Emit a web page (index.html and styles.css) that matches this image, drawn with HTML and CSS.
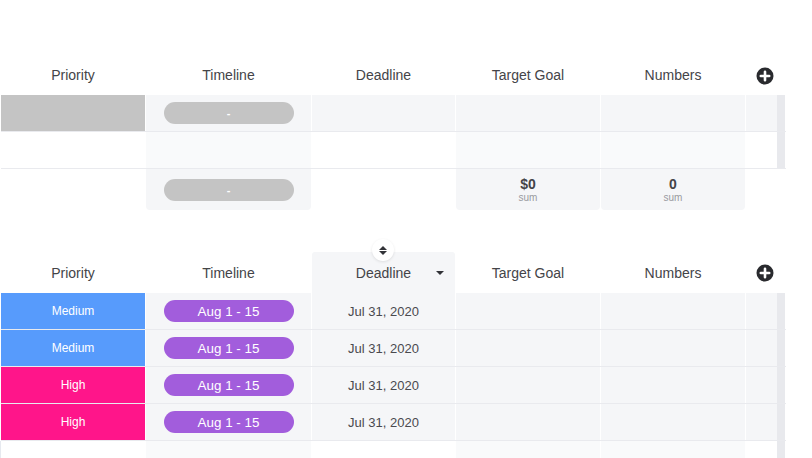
FILE: index.html
```html
<!DOCTYPE html>
<html>
<head>
<meta charset="utf-8">
<link rel="stylesheet" href="styles.css">
</head>
<body>
<div class="board">
  <section class="group group-top">
    <div class="row head">
      <div class="hcell">Priority</div>
      <div class="hcell">Timeline</div>
      <div class="hcell">Deadline</div>
      <div class="hcell">Target Goal</div>
      <div class="hcell">Numbers</div>
      <div class="hcell add-col">
        <svg class="plus" width="18" height="18" viewBox="0 0 18 18"><circle cx="9" cy="9" r="8.5" fill="#292a2e"/><path d="M9 4.8v8.4M4.8 9h8.4" stroke="#fff" stroke-width="2.6" stroke-linecap="round"/></svg>
      </div>
    </div>
    <div class="row item">
      <div class="cell status empty"></div>
      <div class="cell"><span class="pill pill-empty">-</span></div>
      <div class="cell"></div>
      <div class="cell"></div>
      <div class="cell"></div>
      <div class="cell extra"><span class="stripe"></span></div>
    </div>
    <div class="row add">
      <div class="cell blank"></div>
      <div class="cell light"></div>
      <div class="cell blank"></div>
      <div class="cell light"></div>
      <div class="cell light"></div>
      <div class="cell extra blank"><span class="stripe"></span></div>
    </div>
    <div class="row summary">
      <div class="scell"></div>
      <div class="scell filled"><span class="pill pill-empty">-</span></div>
      <div class="scell"></div>
      <div class="scell filled"><span class="sum-val">$0</span><span class="sum-lbl">sum</span></div>
      <div class="scell filled"><span class="sum-val">0</span><span class="sum-lbl">sum</span></div>
      <div class="scell"></div>
    </div>
  </section>

  <section class="group group-bottom">
    <div class="row head">
      <div class="hcell">Priority</div>
      <div class="hcell">Timeline</div>
      <div class="hcell sorted">Deadline<span class="caret"></span>
        <span class="sort-btn"><span class="tri-up"></span><span class="tri-down"></span></span>
      </div>
      <div class="hcell">Target Goal</div>
      <div class="hcell">Numbers</div>
      <div class="hcell add-col">
        <svg class="plus" width="18" height="18" viewBox="0 0 18 18"><circle cx="9" cy="9" r="8.5" fill="#292a2e"/><path d="M9 4.8v8.4M4.8 9h8.4" stroke="#fff" stroke-width="2.6" stroke-linecap="round"/></svg>
      </div>
    </div>
    <div class="row item">
      <div class="cell status medium">Medium</div>
      <div class="cell"><span class="pill pill-time">Aug 1 - 15</span></div>
      <div class="cell date">Jul 31, 2020</div>
      <div class="cell"></div>
      <div class="cell"></div>
      <div class="cell extra"><span class="stripe"></span></div>
    </div>
    <div class="row item">
      <div class="cell status medium">Medium</div>
      <div class="cell"><span class="pill pill-time">Aug 1 - 15</span></div>
      <div class="cell date">Jul 31, 2020</div>
      <div class="cell"></div>
      <div class="cell"></div>
      <div class="cell extra"><span class="stripe"></span></div>
    </div>
    <div class="row item">
      <div class="cell status high">High</div>
      <div class="cell"><span class="pill pill-time">Aug 1 - 15</span></div>
      <div class="cell date">Jul 31, 2020</div>
      <div class="cell"></div>
      <div class="cell"></div>
      <div class="cell extra"><span class="stripe"></span></div>
    </div>
    <div class="row item">
      <div class="cell status high">High</div>
      <div class="cell"><span class="pill pill-time">Aug 1 - 15</span></div>
      <div class="cell date">Jul 31, 2020</div>
      <div class="cell"></div>
      <div class="cell"></div>
      <div class="cell extra"><span class="stripe"></span></div>
    </div>
    <div class="row add">
      <div class="cell blank edge"></div>
      <div class="cell light"></div>
      <div class="cell blank"></div>
      <div class="cell light"></div>
      <div class="cell light"></div>
      <div class="cell extra blank"><span class="stripe"></span></div>
    </div>
  </section>
</div>
</body>
</html>
```

FILE: styles.css
```css
html, body {
  margin: 0;
  padding: 0;
  background: #ffffff;
}

body {
  font-family: "Liberation Sans", Arial, Helvetica, sans-serif;
  color: #444448;
  width: 812px;
  height: 458px;
  overflow: hidden;
}

.board {
  padding-top: 55px;
  padding-left: 1px;
  width: 785px;
}

.group {
  display: flex;
  flex-direction: column;
}

.group-bottom {
  margin-top: 42px;
}

.row {
  display: grid;
  grid-template-columns: 144px 165px 143px 144px 144px 39px;
  column-gap: 1px;
}

.row.head {
  height: 40px;
}

.group-bottom .row.head {
  height: 41px;
}

.hcell {
  display: flex;
  align-items: center;
  justify-content: center;
  font-size: 14px;
  color: #444448;
  position: relative;
}

.hcell.add-col {
  justify-content: flex-start;
  padding-left: 10px;
}

.plus {
  display: block;
  margin-top: 1px;
}

.hcell.sorted {
  background: #f5f6f8;
  border-radius: 3px 3px 0 0;
}

.caret {
  position: absolute;
  right: 11px;
  top: 19px;
  width: 0;
  height: 0;
  border-left: 4px solid transparent;
  border-right: 4px solid transparent;
  border-top: 4px solid #323338;
}

.sort-btn {
  position: absolute;
  left: 60px;
  top: -13px;
  width: 22px;
  height: 22px;
  border-radius: 50%;
  background: #ffffff;
  box-shadow: 0 1px 3px rgba(0, 0, 0, 0.10);
  display: flex;
  flex-direction: column;
  align-items: center;
  justify-content: center;
  gap: 1px;
}

.tri-up {
  width: 0;
  height: 0;
  border-left: 4px solid transparent;
  border-right: 4px solid transparent;
  border-bottom: 4.5px solid #323338;
}

.tri-down {
  width: 0;
  height: 0;
  border-left: 4px solid transparent;
  border-right: 4px solid transparent;
  border-top: 4.5px solid #323338;
}

.row.item,
.row.add {
  height: 36px;
  border-bottom: 1px solid #e9eaee;
}

.cell {
  background: #f5f6f8;
  display: flex;
  align-items: center;
  justify-content: center;
}

.cell.blank {
  background: #ffffff;
}

.cell.light {
  background: #f9fafb;
}

.cell.edge {
  border-left: 1px solid #e6e9ef;
  margin-left: -1px;
}

.cell.extra {
  justify-content: flex-end;
  align-items: stretch;
}

.stripe {
  width: 8px;
  background: #e8e9ed;
}

.status {
  color: #ffffff;
  font-size: 12px;
}

.status.empty {
  background: #c4c4c4;
}

.status.medium {
  background: #579bfc;
}

.status.high {
  background: #ff158a;
}

.pill {
  width: 130px;
  height: 22px;
  border-radius: 11px;
  display: flex;
  align-items: center;
  justify-content: center;
  color: #ffffff;
  font-size: 13px;
}

.pill-empty {
  background: #c4c4c4;
  font-size: 11px;
  font-weight: bold;
}

.pill-time {
  background: #a25ddc;
  font-size: 13.4px;
}

.date {
  font-size: 13px;
  color: #4a4a4f;
}

.row.summary {
  height: 41px;
}

.scell {
  display: flex;
  flex-direction: column;
  align-items: center;
  justify-content: center;
}

.scell.filled {
  background: #f5f6f8;
  border-radius: 0 0 4px 4px;
}

.sum-val {
  font-size: 14px;
  font-weight: bold;
  color: #444448;
  line-height: 16px;
}

.sum-lbl {
  font-size: 10px;
  color: #9a9ba0;
  line-height: 12px;
}
```
